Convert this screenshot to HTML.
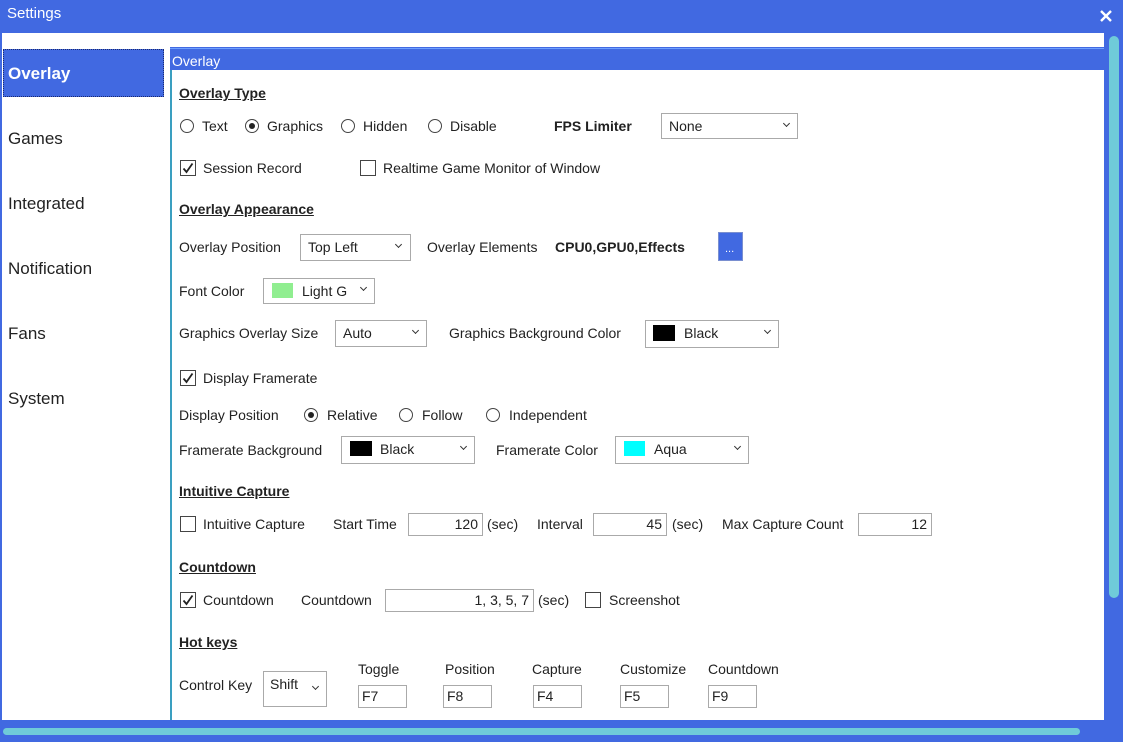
<!DOCTYPE html>
<html><head><meta charset="utf-8"><style>
*{margin:0;padding:0;box-sizing:border-box}
body{width:1123px;height:742px;background:#4169e1;position:relative;overflow:hidden;font-family:"Liberation Sans",sans-serif;font-size:14px;color:#222}
div,span,svg{position:absolute}
.t{line-height:18px;white-space:nowrap}
.h{font-weight:bold;text-decoration:underline;line-height:18px;white-space:nowrap}
.b{font-weight:bold}
.rad{width:14px;height:14px;border:1px solid #444;border-radius:50%;background:#fff}
.rad.on::after{content:"";position:absolute;left:3px;top:3px;width:6px;height:6px;border-radius:50%;background:#222}
.cb{width:16px;height:16px;border:1px solid #444;background:#fff}
.sel{border:1px solid #aaa;background:#fff}
.inp{border:1px solid #aaa;background:#fff;text-align:right;padding-right:4px;line-height:21px}
.ch{width:5px;height:5px;border-right:1.5px solid #333;border-bottom:1.5px solid #333;transform:rotate(45deg)}
.side{font-size:17px;left:8px;line-height:22px}
</style></head><body>
<div class="t" style="left:7px;top:5px;color:#fff;font-size:15px">Settings</div>
<svg style="left:1099px;top:9px" width="14" height="14"><path d="M2 2L12 12M12 2L2 12" stroke="#fff" stroke-width="2.4"/></svg>
<div style="left:2px;top:33px;width:1102px;height:14px;background:#fff"></div>
<div style="left:1109px;top:36px;width:10px;height:562px;background:#6fcbd9;border-radius:5px"></div>
<div style="left:2px;top:47px;width:168px;height:673px;background:#fff"></div>
<div style="left:3px;top:49px;width:161px;height:48px;background:#4169e1;border:1px dotted #1a2a70"></div>
<div class="side" style="top:63px;color:#fff;font-weight:bold">Overlay</div>
<div class="side" style="top:128px">Games</div>
<div class="side" style="top:193px">Integrated</div>
<div class="side" style="top:258px">Notification</div>
<div class="side" style="top:323px">Fans</div>
<div class="side" style="top:388px">System</div>
<div style="left:170px;top:48px;width:934px;height:672px;background:#fff;border-left:2px solid #3a9fc0"></div>
<div style="left:170px;top:48px;width:934px;height:22px;background:#4169e1;border-top:1px solid #6fa0ff"></div>
<div class="t" style="left:172px;top:52px;color:#fff">Overlay</div>

<div class="h" style="left:179px;top:84px">Overlay Type</div>
<div class="rad" style="left:180px;top:119px"></div><div class="t" style="left:202px;top:117px">Text</div>
<div class="rad on" style="left:245px;top:119px"></div><div class="t" style="left:267px;top:117px">Graphics</div>
<div class="rad" style="left:341px;top:119px"></div><div class="t" style="left:363px;top:117px">Hidden</div>
<div class="rad" style="left:428px;top:119px"></div><div class="t" style="left:450px;top:117px">Disable</div>
<div class="t b" style="left:554px;top:117px">FPS Limiter</div>
<div class="sel" style="left:661px;top:113px;width:137px;height:26px"></div><div class="t" style="left:669px;top:117px">None</div><div class="ch" style="left:784px;top:121px"></div>

<div class="cb" style="left:180px;top:160px"></div><svg style="left:180px;top:160px" width="16" height="16"><path d="M3.5 8.5L6.5 12L12.5 3.5" stroke="#222" stroke-width="1.8" fill="none"/></svg><div class="t" style="left:203px;top:159px">Session Record</div>
<div class="cb" style="left:360px;top:160px"></div><div class="t" style="left:383px;top:159px">Realtime Game Monitor of Window</div>

<div class="h" style="left:179px;top:200px">Overlay Appearance</div>
<div class="t" style="left:179px;top:238px">Overlay Position</div>
<div class="sel" style="left:300px;top:234px;width:111px;height:27px"></div><div class="t" style="left:308px;top:238px">Top Left</div><div class="ch" style="left:396px;top:242px"></div>
<div class="t" style="left:427px;top:238px">Overlay Elements</div>
<div class="t b" style="left:555px;top:238px">CPU0,GPU0,Effects</div>
<div style="left:718px;top:232px;width:25px;height:29px;background:#4169e1;border:1px solid #7a8fd0"></div><div class="t" style="left:725px;top:240px;color:#fff;font-size:11px">...</div>

<div class="t" style="left:179px;top:282px">Font Color</div>
<div class="sel" style="left:263px;top:278px;width:112px;height:26px"></div><div style="left:272px;top:283px;width:21px;height:15px;background:#90ee90"></div><div class="t" style="left:302px;top:282px">Light G</div><div class="ch" style="left:361px;top:285px"></div>

<div class="t" style="left:179px;top:324px">Graphics Overlay Size</div>
<div class="sel" style="left:335px;top:320px;width:92px;height:27px"></div><div class="t" style="left:343px;top:324px">Auto</div><div class="ch" style="left:413px;top:328px"></div>
<div class="t" style="left:449px;top:324px">Graphics Background Color</div>
<div class="sel" style="left:645px;top:320px;width:134px;height:28px"></div><div style="left:653px;top:325px;width:22px;height:16px;background:#000"></div><div class="t" style="left:684px;top:324px">Black</div><div class="ch" style="left:765px;top:328px"></div>

<div class="cb" style="left:180px;top:370px"></div><svg style="left:180px;top:370px" width="16" height="16"><path d="M3.5 8.5L6.5 12L12.5 3.5" stroke="#222" stroke-width="1.8" fill="none"/></svg><div class="t" style="left:203px;top:369px">Display Framerate</div>

<div class="t" style="left:179px;top:406px">Display Position</div>
<div class="rad on" style="left:304px;top:408px"></div><div class="t" style="left:327px;top:406px">Relative</div>
<div class="rad" style="left:399px;top:408px"></div><div class="t" style="left:422px;top:406px">Follow</div>
<div class="rad" style="left:486px;top:408px"></div><div class="t" style="left:509px;top:406px">Independent</div>

<div class="t" style="left:179px;top:441px">Framerate Background</div>
<div class="sel" style="left:341px;top:436px;width:134px;height:28px"></div><div style="left:350px;top:441px;width:22px;height:15px;background:#000"></div><div class="t" style="left:380px;top:440px">Black</div><div class="ch" style="left:461px;top:444px"></div>
<div class="t" style="left:496px;top:441px">Framerate Color</div>
<div class="sel" style="left:615px;top:436px;width:134px;height:28px"></div><div style="left:624px;top:441px;width:21px;height:15px;background:#00ffff"></div><div class="t" style="left:654px;top:440px">Aqua</div><div class="ch" style="left:735px;top:444px"></div>

<div class="h" style="left:179px;top:482px">Intuitive Capture</div>
<div class="cb" style="left:180px;top:516px"></div><div class="t" style="left:203px;top:515px">Intuitive Capture</div>
<div class="t" style="left:333px;top:515px">Start Time</div>
<div class="inp" style="left:408px;top:513px;width:75px;height:23px">120</div><div class="t" style="left:487px;top:515px">(sec)</div>
<div class="t" style="left:537px;top:515px">Interval</div>
<div class="inp" style="left:593px;top:513px;width:74px;height:23px">45</div><div class="t" style="left:672px;top:515px">(sec)</div>
<div class="t" style="left:722px;top:515px">Max Capture Count</div>
<div class="inp" style="left:858px;top:513px;width:74px;height:23px">12</div>

<div class="h" style="left:179px;top:558px">Countdown</div>
<div class="cb" style="left:180px;top:592px"></div><svg style="left:180px;top:592px" width="16" height="16"><path d="M3.5 8.5L6.5 12L12.5 3.5" stroke="#222" stroke-width="1.8" fill="none"/></svg><div class="t" style="left:203px;top:591px">Countdown</div>
<div class="t" style="left:301px;top:591px">Countdown</div>
<div class="inp" style="left:385px;top:589px;width:149px;height:23px">1, 3, 5, 7</div><div class="t" style="left:538px;top:591px">(sec)</div>
<div class="cb" style="left:585px;top:592px"></div><div class="t" style="left:609px;top:591px">Screenshot</div>

<div class="h" style="left:179px;top:633px">Hot keys</div>
<div class="t" style="left:179px;top:676px">Control Key</div>
<div class="sel" style="left:263px;top:671px;width:64px;height:36px"></div><div class="t" style="left:270px;top:675px">Shift</div><div class="ch" style="left:313px;top:684px"></div>
<div class="t" style="left:358px;top:660px">Toggle</div>
<div class="t" style="left:445px;top:660px">Position</div>
<div class="t" style="left:532px;top:660px">Capture</div>
<div class="t" style="left:620px;top:660px">Customize</div>
<div class="t" style="left:708px;top:660px">Countdown</div>
<div class="inp" style="left:358px;top:685px;width:49px;height:23px;text-align:left;padding-left:3px">F7</div>
<div class="inp" style="left:443px;top:685px;width:49px;height:23px;text-align:left;padding-left:3px">F8</div>
<div class="inp" style="left:533px;top:685px;width:49px;height:23px;text-align:left;padding-left:3px">F4</div>
<div class="inp" style="left:620px;top:685px;width:49px;height:23px;text-align:left;padding-left:3px">F5</div>
<div class="inp" style="left:708px;top:685px;width:49px;height:23px;text-align:left;padding-left:3px">F9</div>

<div style="left:3px;top:728px;width:1077px;height:7px;background:#6fcbd9;border-radius:4px"></div>
</body></html>
